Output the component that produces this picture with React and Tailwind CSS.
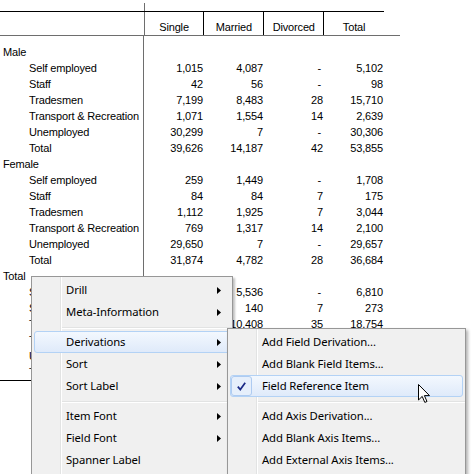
import React from "react";

const sections = [
  {
    label: "Male",
    rows: [
      ["Self employed", "1,015", "4,087", "-", "5,102"],
      ["Staff", "42", "56", "-", "98"],
      ["Tradesmen", "7,199", "8,483", "28", "15,710"],
      ["Transport & Recreation", "1,071", "1,554", "14", "2,639"],
      ["Unemployed", "30,299", "7", "-", "30,306"],
      ["Total", "39,626", "14,187", "42", "53,855"],
    ],
  },
  {
    label: "Female",
    rows: [
      ["Self employed", "259", "1,449", "-", "1,708"],
      ["Staff", "84", "84", "7", "175"],
      ["Tradesmen", "1,112", "1,925", "7", "3,044"],
      ["Transport & Recreation", "769", "1,317", "14", "2,100"],
      ["Unemployed", "29,650", "7", "-", "29,657"],
      ["Total", "31,874", "4,782", "28", "36,684"],
    ],
  },
  {
    label: "Total",
    rows: [
      ["Self employed", "1,274", "5,536", "-", "6,810"],
      ["Staff", "126", "140", "7", "273"],
      ["Tradesmen", "8,311", "10,408", "35", "18,754"],
      ["Transport & Recreation", "1,840", "2,871", "28", "4,739"],
      ["Unemployed", "59,949", "14", "-", "59,963"],
      ["Total", "71,500", "18,969", "70", "90,539"],
    ],
  },
];

function Arrow() {
  return (
    <svg width="4" height="7" viewBox="0 0 4 7" className="block">
      <polygon points="0,0 4,3.5 0,7" fill="#000" />
    </svg>
  );
}

function Check() {
  return (
    <svg width="9" height="9" viewBox="0 0 9 9" className="block">
      <path d="M0.8 4.6 L3.3 7.6 L8.2 0.8" stroke="#1b2a86" strokeWidth="1.7" fill="none" />
    </svg>
  );
}

function Item({ label, arrow, hot, checked }) {
  return (
    <div
      className={
        "relative mx-[2px] h-[22px] flex items-center justify-between pl-[31px] pr-[8px] rounded-[3px] border " +
        (hot
          ? "border-[#b3d2f5] bg-gradient-to-b from-[#f3f8fe] to-[#dfeafa]"
          : "border-transparent")
      }
    >
      {checked && (
        <div className="absolute left-[0px] top-[0px] w-[21px] h-[20px] rounded-[3px] border border-[#aecbf1] bg-[#e6effb] flex items-center justify-center">
          <Check />
        </div>
      )}
      <span className="leading-[20px] whitespace-nowrap">{label}</span>
      {arrow && <Arrow />}
    </div>
  );
}

function Sep() {
  return (
    <div className="h-[8px] ml-[30px] pt-[4px]">
      <div className="h-px bg-[#e2e3e3]" />
      <div className="h-px bg-white" />
    </div>
  );
}

export default function App() {
  return (
    <div
      className="relative w-[473px] h-[474px] overflow-hidden bg-white text-black text-[11px] tracking-[-0.15px]"
      style={{ fontFamily: '"Liberation Sans", Arial, sans-serif' }}
    >
      {/* top spacer with vertical line */}
      <div className="h-[11px] flex">
        <div className="w-[145px] mt-[3px] border-r border-[#6e6e6e]" />
      </div>
      {/* header */}
      <div className="w-[384px] border-t border-black flex h-[24px]">
        <div className="w-[145px] border-r border-[#6e6e6e]" />
        {["Single", "Married", "Divorced", "Total"].map((h, i) => (
          <div
            key={h}
            className={
              "w-[60px] text-center pt-[7px] leading-[16px] " +
              (i < 3 ? "border-r border-black" : "")
            }
          >
            {h}
          </div>
        ))}
      </div>
      <div className="w-[400px] h-px bg-[#6e6e6e]" />
      {/* body */}
      <div className="w-[384px] flex border-b border-black">
        <div className="w-[145px] border-r border-[#6e6e6e] pt-[8px]">
          {sections.map((s) => (
            <React.Fragment key={s.label}>
              <div className="h-[16px] leading-[16px] pl-[3px]">{s.label}</div>
              {s.rows.map((r, i) => (
                <div key={i} className="h-[16px] leading-[16px] pl-[29px] whitespace-nowrap">
                  {r[0]}
                </div>
              ))}
            </React.Fragment>
          ))}
        </div>
        <div className="flex-1 pt-[8px]">
          {sections.map((s) => (
            <React.Fragment key={s.label}>
              <div className="h-[16px]" />
              {s.rows.map((r, i) => (
                <div key={i} className="h-[16px] leading-[16px] flex">
                  {r.slice(1).map((v, j) => (
                    <div
                      key={j}
                      className={
                        "w-[60px] text-right " + (v === "-" ? "pr-[3px]" : "pr-[1px]")
                      }
                    >
                      {v}
                    </div>
                  ))}
                </div>
              ))}
            </React.Fragment>
          ))}
        </div>
      </div>

      {/* context menu */}
      <div
        className="absolute left-[31px] top-[276px] w-[202px] h-[220px] bg-[#f0f0f0] border border-[#979797] pt-[2px] text-[11.3px] tracking-[-0.1px] shadow-[2px_2px_2px_rgba(0,0,0,0.25)]"
        style={{ fontFamily: '"Noto Sans", "Open Sans", sans-serif' }}
      >
        <div className="absolute left-[28px] top-0 bottom-0 w-[2px] border-l border-[#e2e3e3] border-r border-r-white" />
        <Item label="Drill" arrow />
        <Item label="Meta-Information" arrow />
        <Sep />
        <Item label="Derivations" arrow hot />
        <Item label="Sort" arrow />
        <Item label="Sort Label" arrow />
        <Sep />
        <Item label="Item Font" arrow />
        <Item label="Field Font" arrow />
        <Item label="Spanner Label" />
      </div>

      {/* submenu */}
      <div
        className="absolute left-[227px] top-[328px] w-[239px] h-[170px] bg-[#f0f0f0] border border-[#979797] pt-[2px] text-[11.3px] tracking-[-0.1px] shadow-[2px_2px_3px_rgba(0,0,0,0.3)]"
        style={{ fontFamily: '"Noto Sans", "Open Sans", sans-serif' }}
      >
        <div className="absolute left-[28px] top-0 bottom-0 w-[2px] border-l border-[#e2e3e3] border-r border-r-white" />
        <Item label="Add Field Derivation..." />
        <Item label="Add Blank Field Items..." />
        <Item label="Field Reference Item" hot checked />
        <Sep />
        <Item label="Add Axis Derivation..." />
        <Item label="Add Blank Axis Items..." />
        <Item label="Add External Axis Items..." />
      </div>

      {/* mouse cursor */}
      <svg
        className="absolute left-[418px] top-[384px]"
        width="13"
        height="20"
        viewBox="0 0 13 20"
      >
        <path
          d="M0.5 0.5 L0.5 16 L4.2 12.4 L6.8 18.4 L9 17.5 L6.4 11.6 L11.5 11.6 Z"
          fill="#fff"
          stroke="#000"
          strokeWidth="1"
          strokeLinejoin="miter"
        />
      </svg>
    </div>
  );
}
